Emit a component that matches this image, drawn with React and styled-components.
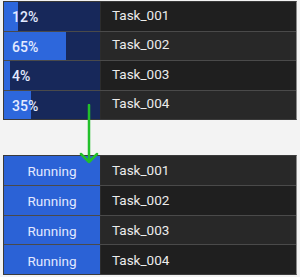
import styled, { createGlobalStyle } from "styled-components";

const Global = createGlobalStyle`
  body {
    margin: 0;
    background: #f3f3f3;
    font-family: Roboto, "Liberation Sans", sans-serif;
  }
`;

const Page = styled.div`
  position: relative;
  padding: 1px 3px 0 3px;
  display: flex;
  flex-direction: column;
  gap: 35px;
  width: 294px;
`;

const Table = styled.div`
  display: flex;
  flex-direction: column;
  gap: 1px;
  background: #4a4a4a;
  border: 1px solid #3a3a3a;
  border-right-color: #8a8a8a;
`;

const Row = styled.div`
  display: grid;
  grid-template-columns: 96px 1fr;
  gap: 1px;
  height: ${(p) => p.$h}px;
  background: #2c2c2c;
`;

const Progress = styled.div`
  position: relative;
  background: #17285a;
  display: flex;
  align-items: center;
  padding-left: 8px;
  color: #e4eaff;
  font-size: 14px;
  font-weight: 500;
`;

const Fill = styled.div`
  position: absolute;
  left: 0;
  top: 0;
  bottom: 0;
  background: #2d67dc;
`;

const Label = styled.span`
  position: relative;
  padding-top: 2px;
`;

const Status = styled.div`
  background: #2b62d6;
  color: #e2e9ff;
  font-size: 13.5px;
  display: flex;
  align-items: center;
  justify-content: center;
  padding-top: 2px;
`;

const Name = styled.div`
  background: ${(p) => (p.$alt ? "#282828" : "#1f1f1f")};
  color: #ececec;
  font-size: 13.5px;
  display: flex;
  align-items: center;
  padding-left: 11px;
  padding-bottom: ${(p) => (p.$top ? "3px" : "0")};
`;

const Arrow = styled.svg`
  position: absolute;
  left: 79px;
  top: 104px;
`;

const tasks = [
  { name: "Task_001", pct: 12, fill: 15 },
  { name: "Task_002", pct: 65, fill: 65 },
  { name: "Task_003", pct: 4, fill: 6 },
  { name: "Task_004", pct: 35, fill: 28 },
];

export default function App() {
  return (
    <>
      <Global />
      <Page>
        <Table>
          {tasks.map((t, i) => (
            <Row key={t.name} $h={28.5}>
              <Progress>
                <Fill style={{ width: `${t.fill}%` }} />
                <Label>{t.pct}%</Label>
              </Progress>
              <Name $alt={i % 2 === 1} $top>
                {t.name}
              </Name>
            </Row>
          ))}
        </Table>
        <Table>
          {tasks.map((t, i) => (
            <Row key={t.name} $h={28.75}>
              <Status>Running</Status>
              <Name $alt={i % 2 === 0}>{t.name}</Name>
            </Row>
          ))}
        </Table>
        <Arrow width="20" height="62" viewBox="0 0 20 62">
          <path
            d="M10 1 V58 M2 50 L10 58 L18 50"
            stroke="#22c02a"
            strokeWidth="2.5"
            fill="none"
            strokeLinecap="round"
            strokeLinejoin="round"
          />
        </Arrow>
      </Page>
    </>
  );
}
